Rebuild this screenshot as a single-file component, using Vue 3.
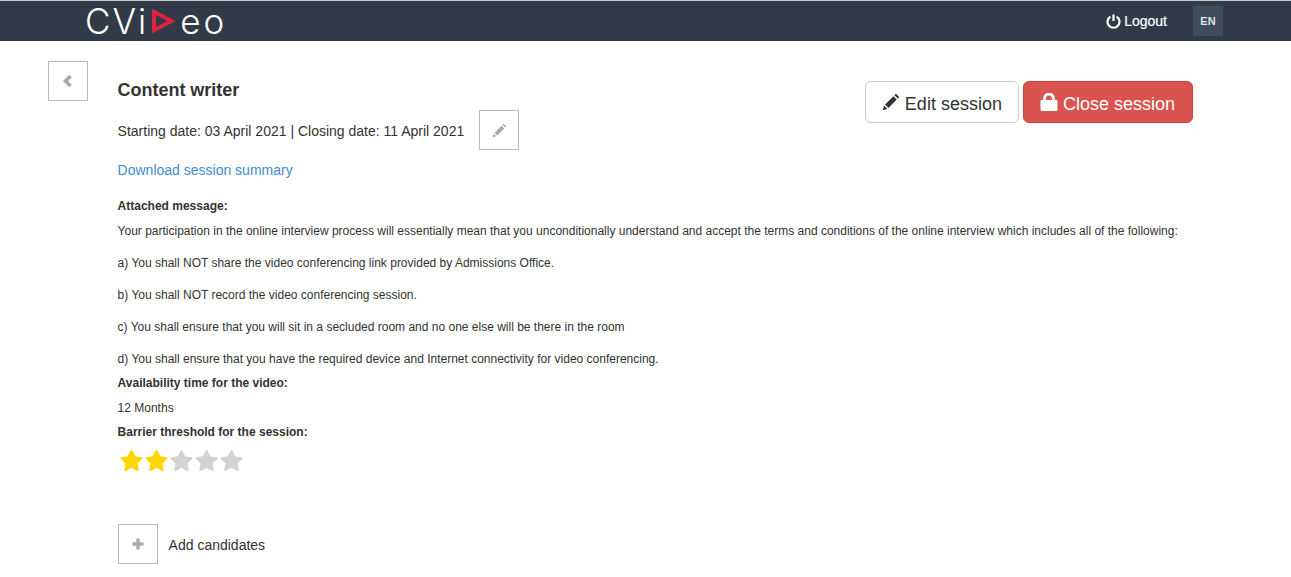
<script setup>
const lines = [
  'Your participation in the online interview process will essentially mean that you unconditionally understand and accept the terms and conditions of the online interview which includes all of the following:',
  'a) You shall NOT share the video conferencing link provided by Admissions Office.',
  'b) You shall NOT record the video conferencing session.',
  'c) You shall ensure that you will sit in a secluded room and no one else will be there in the room',
  'd) You shall ensure that you have the required device and Internet connectivity for video conferencing.'
]
const stars = [1, 1, 0, 0, 0]
</script>

<template>
  <div class="page">
    <header class="nav">
      <div class="brand">
        <span class="cvi">CVi</span>
        <svg class="play" width="24" height="26" viewBox="0 0 24 26"><path fill-rule="evenodd" d="M0 0.5 L23.5 13 L0 25.5 Z M4 7 V19 L15.5 13 Z" fill="#e0213f"/></svg>
        <span class="eo">eo</span>
      </div>
      <div class="nav-right">
        <a class="logout">
          <svg width="15" height="15" viewBox="0 0 15 15"><path d="M4.4 2.6 A6 6 0 1 0 10.6 2.6" fill="none" stroke="#fff" stroke-width="2.2"/><path d="M7.5 .5 V7" stroke="#fff" stroke-width="2.2"/></svg>
          <span>Logout</span>
        </a>
        <span class="lang">EN</span>
      </div>
    </header>
    <main class="main">
      <button class="square back">
        <svg width="12" height="14" viewBox="0 0 12 14"><path d="M8.5 2 L3.5 7 L8.5 12" fill="none" stroke="#aaa" stroke-width="3.6"/></svg>
      </button>
      <div class="content">
        <div class="top">
          <div>
            <h1>Content writer</h1>
            <div class="dates">
              <span>Starting date: 03 April 2021 | Closing date: 11 April 2021</span>
              <button class="square">
                <svg width="15" height="15" viewBox="0 0 14 14"><path d="M0.6 13.4 L1.6 9.8 L4.2 12.4 Z M2.4 9 L8.9 2.5 L11.5 5.1 L5 11.6 Z M9.7 1.7 L10.8 .6 L13.4 3.2 L12.3 4.3 Z" fill="#aaa"/></svg>
              </button>
            </div>
            <a class="download">Download session summary</a>
          </div>
          <div class="actions">
            <button class="btn edit">
              <svg width="18" height="18" viewBox="0 0 14 14"><path d="M0.6 13.4 L1.6 9.8 L4.2 12.4 Z M2.4 9 L8.9 2.5 L11.5 5.1 L5 11.6 Z M9.7 1.7 L10.8 .6 L13.4 3.2 L12.3 4.3 Z" fill="#333"/></svg>
              <span>Edit session</span>
            </button>
            <button class="btn close">
              <svg width="18" height="18" viewBox="0 0 18 18"><path d="M4.6 8 V5.5 A4.4 4.4 0 0 1 13.4 5.5 V8" fill="none" stroke="#fff" stroke-width="3"/><rect x="0.5" y="7" width="17" height="11" rx="1.2" fill="#fff"/></svg>
              <span>Close session</span>
            </button>
          </div>
        </div>
        <div class="small">
          <p class="label first">Attached message:</p>
          <p v-for="l in lines" :key="l" class="line">{{ l }}</p>
          <p class="label avail">Availability time for the video:</p>
          <p class="months">12 Months</p>
          <p class="label barrier">Barrier threshold for the session:</p>
          <div class="stars">
            <svg v-for="(s, i) in stars" :key="i" class="star" width="25" height="24" viewBox="0 0 25 24"><path d="M12.5 3 L15.6 9.3 L22.5 10.3 L17.5 15.1 L18.7 22 L12.5 18.7 L6.3 22 L7.5 15.1 L2.5 10.3 L9.4 9.3 Z" :fill="s ? '#ffd700' : '#d3d3d3'" :stroke="s ? '#ffd700' : '#d3d3d3'" stroke-width="2" stroke-linejoin="round"/></svg>
          </div>
        </div>
        <div class="add">
          <button class="square">
            <svg width="12" height="12" viewBox="0 0 12 12"><path d="M6 .5 V11.5 M.5 6 H11.5" stroke="#aaa" stroke-width="3.4"/></svg>
          </button>
          <span>Add candidates</span>
        </div>
      </div>
    </main>
  </div>
</template>

<style>
html, body { margin: 0; background: #fff; }
</style>

<style scoped>
.page { font-family: "Liberation Sans", Arial, sans-serif; color: #333; height: 577px; overflow: hidden; }
.nav { height: 41px; box-sizing: border-box; background: #323a47; border-top: 1px solid #c9c9c9; display: flex; justify-content: space-between; align-items: center; padding: 0 68px 0 85px; }
.brand { display: flex; align-items: center; color: #fff; font-family: Inter, sans-serif; font-weight: 300; font-size: 35px; line-height: 38px; height: 38px; }
.cvi { letter-spacing: 2px; }
.play { margin: 0 4px 0 4px; flex: none; }
.eo { letter-spacing: 3px; }
.nav-right { display: flex; align-items: center; gap: 26px; }
.logout { display: flex; align-items: center; gap: 3px; color: #fff; font-size: 14px; font-weight: 400; -webkit-text-stroke: .2px #fff; }
.lang { width: 30px; height: 30px; background: #414c5c; color: #dfe3e8; font-size: 11px; font-weight: 700; display: flex; align-items: center; justify-content: center; }
.main { display: flex; padding: 20px 0 0 48px; }
.square { width: 40px; height: 40px; flex: none; box-sizing: border-box; background: #fff; border: 1px solid #bbb; padding: 0; display: flex; align-items: center; justify-content: center; }
.content { margin-left: 29.6px; width: 1075.4px; }
.top { display: flex; justify-content: space-between; }
h1 { font-size: 18px; font-weight: 700; line-height: 20px; margin: 19px 0 0; color: #333; letter-spacing: -.03px; }
.dates { display: flex; align-items: center; gap: 15px; font-size: 14px; margin-top: 10px; }
.dates span { position: relative; top: 1px; }
.download { display: block; color: #428bca; font-size: 14px; line-height: 20px; margin-top: 10px; }
.actions { display: flex; gap: 4px; margin-top: 20px; height: 42px; }
.btn { box-sizing: border-box; height: 42px; border-radius: 6px; font-family: inherit; font-size: 18px; padding: 0 17px 0 16px; display: flex; align-items: center; gap: 5px; }
.btn span { position: relative; top: 2px; }
.edit { background: #fff; border: 1px solid #ccc; color: #333; padding-right: 16px; }
.close { background: #d9534f; border: 1px solid #d43f3a; color: #fff; }
.small { font-size: 12px; margin-top: 18px; }
.small p { margin: 0; line-height: 17px; }
.label { font-weight: 700; }
.line { margin-top: 15px !important; }
.first + .line { margin-top: 8px !important; }
.avail { margin-top: 7px !important; }
.months { margin-top: 8px !important; }
.barrier { margin-top: 7px !important; }
.stars { display: flex; margin-top: 7px; margin-left: 1px; }
.add { display: flex; align-items: center; gap: 11px; font-size: 14px; margin-top: 52px; }
.add span { position: relative; top: 1px; }
</style>
